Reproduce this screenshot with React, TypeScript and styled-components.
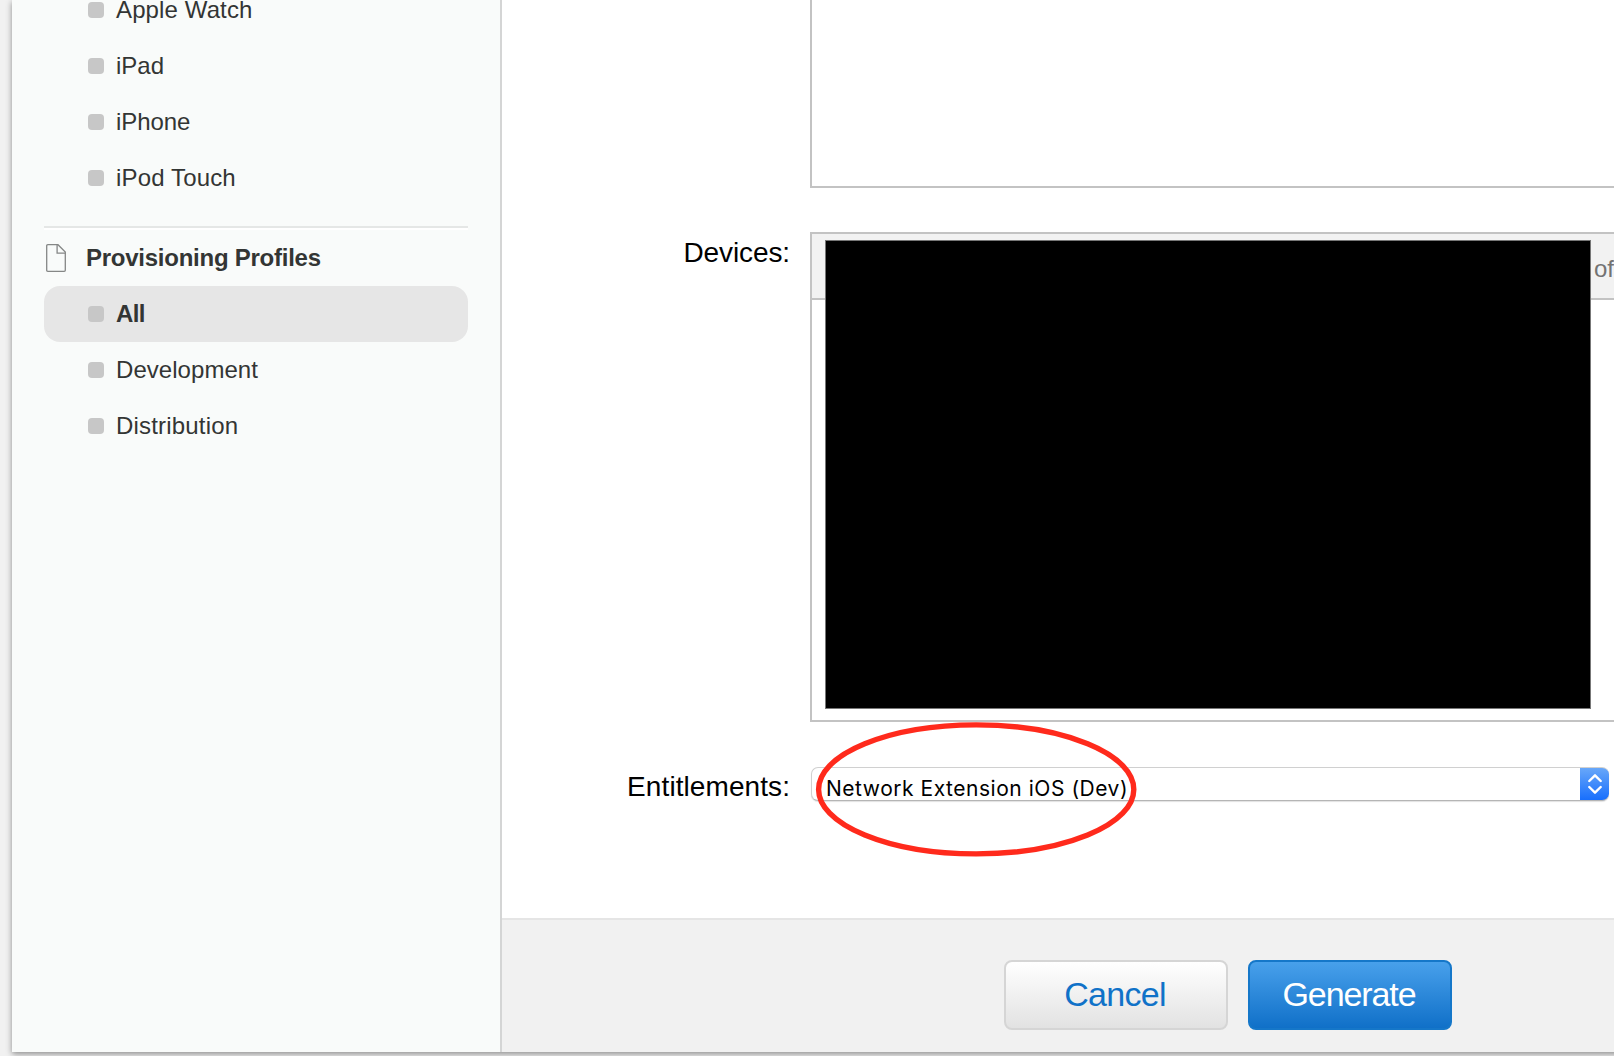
import React from "react";
import styled, { createGlobalStyle, css } from "styled-components";

const GlobalStyle = createGlobalStyle`
  *, *::before, *::after { box-sizing: border-box; }
  html, body { margin: 0; padding: 0; background: #f1f1f1; }
  body {
    font-family: "Liberation Sans", Arial, Helvetica, sans-serif;
    overflow: hidden;
  }
`;

const Page = styled.div`
  height: 1056px;
  padding: 0 0 4px 12px;
  overflow: hidden;
  background: #f1f1f1;
`;

const Panel = styled.div`
  display: flex;
  width: 1640px;
  height: 1052px;
  background: #fff;
  box-shadow: 0 2px 6px rgba(0, 0, 0, 0.42);
`;

const Sidebar = styled.nav`
  flex: none;
  width: 490px;
  padding: 0 32px;
  overflow: hidden;
  background: #f9fbfa;
  border-right: 2px solid #d4d5d5;
`;

const List = styled.ul<{ $scrolled?: boolean }>`
  margin: ${(p) => (p.$scrolled ? "-18px" : "0")} 0 0;
  padding: 0;
  list-style: none;
`;

const Item = styled.li<{ $active?: boolean }>`
  display: flex;
  align-items: center;
  gap: 12px;
  height: 56px;
  padding-left: 44px;
  border-radius: 16px;
  font-size: 24px;
  line-height: 20px;
  color: #333534;
  ${(p) =>
    p.$active &&
    css`
      background: #e6e6e6;
      font-weight: 700;
    `}

  &::before {
    content: "";
    width: 16px;
    height: 16px;
    border-radius: 4px;
    background: #c7c7c7;
  }
`;

const ItemText = styled.span<{ $spacing: number }>`
  letter-spacing: ${(p) => p.$spacing}px;
  white-space: nowrap;
`;

const Divider = styled.hr`
  height: 4px;
  margin: 20px 0 0;
  border: 0;
  border-top: 2px solid #e5e7e6;
  background: #fff;
`;

const SectionTitle = styled.h2`
  display: flex;
  align-items: center;
  gap: 20px;
  height: 56px;
  margin: 0;
  padding-left: 2px;
  font-size: 24px;
  line-height: 28px;
  color: #333534;
  white-space: nowrap;
`;

const Main = styled.main`
  flex: 1;
  display: flex;
  flex-direction: column;
`;

const Form = styled.div`
  display: grid;
  grid-template-columns: 288px 1fr;
  grid-template-rows: 188px 490px 34px;
  column-gap: 20px;
  row-gap: 44px;
  height: 918px;
`;

const Label = styled.label<{ $spacing: number }>`
  grid-column: 1;
  padding-top: 5px;
  font-size: 28px;
  line-height: 32px;
  letter-spacing: ${(p) => p.$spacing}px;
  text-align: right;
  white-space: nowrap;
  color: #000;
`;

const ListBox = styled.div<{ $open?: boolean }>`
  grid-column: 2;
  position: relative;
  border: 2px solid #c3c3c3;
  border-top-width: ${(p) => (p.$open ? 0 : 2)}px;
  background: #fff;
`;

const ListHead = styled.div`
  height: 66px;
  padding: 21px 0 0 782px;
  border-bottom: 2px solid #c3c3c3;
  background: #f2f2f2;
  color: #737373;
  font-size: 24px;
  line-height: 28px;
`;

const Redaction = styled.div`
  position: absolute;
  left: 13px;
  top: 6px;
  width: 766px;
  height: 469px;
  background: #000;
  border: 1px solid #777;
`;

const SelectCell = styled.div`
  grid-column: 2;
  position: relative;
  padding: 1px 0 0 1px;
`;

const Select = styled.div`
  display: flex;
  width: 798px;
  height: 34px;
  border-radius: 7px;
  overflow: hidden;
  background: linear-gradient(#6aa9f9, #156dfd) right / 29px 100% no-repeat border-box, #fff;
  border: 1px solid #d0d0d0;
  border-right: 0;
  border-bottom-color: #b5b5b5;
  box-shadow: 0 1px 1px rgba(0, 0, 0, 0.12);
`;

const SelectValue = styled.span`
  flex: 1;
  padding-left: 14px;
  font-family: Inter, "Liberation Sans", sans-serif;
  font-size: 21px;
  line-height: 41px;
  letter-spacing: 0.53px;
  white-space: nowrap;
  color: #000;
`;

const Stepper = styled.span`
  flex: none;
  display: grid;
  place-items: center;
  width: 29px;
  height: 32px;
`;

const Highlight = styled.svg`
  position: absolute;
  left: 4px;
  top: -46px;
`;

const Footer = styled.footer`
  flex: 1;
  display: flex;
  gap: 20px;
  padding: 40px 0 0 502px;
  border-top: 2px solid #e5e5e5;
  background: #f1f1f1;
`;

const Button = styled.button<{ $primary?: boolean }>`
  width: ${(p) => (p.$primary ? 204 : 224)}px;
  height: 70px;
  padding: 0 2px 1px 0;
  border: 2px solid ${(p) => (p.$primary ? "#1577c9" : "#d5d5d5")};
  border-radius: 8px;
  background: ${(p) =>
    p.$primary
      ? "linear-gradient(#48a0eb, #1070c8)"
      : "linear-gradient(#ffffff, #e2e2e2)"};
  color: ${(p) => (p.$primary ? "#fff" : "#1072c8")};
  font-family: inherit;
  font-size: 34px;
  letter-spacing: ${(p) => (p.$primary ? -1.1 : -0.7)}px;
`;

const FileIcon = () => (
  <svg width="20" height="28" viewBox="0 0 20 28" fill="none" stroke="#858786" strokeWidth="1.3">
    <path d="M1.8.7H12L19.3 8V26.2Q19.3 27.3 18.2 27.3H1.8Q.7 27.3 .7 26.2V1.8Q.7.7 1.8.7Z" />
    <path d="M11.1.8V9.2H19.2" />
  </svg>
);

const devices = [
  { name: "Apple Watch", spacing: 0.12 },
  { name: "iPad", spacing: 0 },
  { name: "iPhone", spacing: -0.1 },
  { name: "iPod Touch", spacing: 0.15 },
];

const profiles = [
  { name: "All", spacing: -0.6, active: true },
  { name: "Development", spacing: 0.05 },
  { name: "Distribution", spacing: 0.18 },
];

export default function App() {
  return (
    <>
      <GlobalStyle />
      <Page>
        <Panel>
          <Sidebar>
            <List $scrolled>
              {devices.map((d) => (
                <Item key={d.name}>
                  <ItemText $spacing={d.spacing}>{d.name}</ItemText>
                </Item>
              ))}
            </List>
            <Divider />
            <SectionTitle>
              <FileIcon />
              <ItemText $spacing={-0.25}>Provisioning Profiles</ItemText>
            </SectionTitle>
            <List>
              {profiles.map((p) => (
                <Item key={p.name} $active={p.active}>
                  <ItemText $spacing={p.spacing}>{p.name}</ItemText>
                </Item>
              ))}
            </List>
          </Sidebar>
          <Main>
            <Form>
              <ListBox $open />
              <Label $spacing={-0.1}>Devices:</Label>
              <ListBox>
                <ListHead>of</ListHead>
                <Redaction />
              </ListBox>
              <Label $spacing={0.08}>Entitlements:</Label>
              <SelectCell>
                <Select>
                  <SelectValue>Network Extension iOS (Dev)</SelectValue>
                  <Stepper>
                    <svg width="14" height="20" viewBox="0 0 14 20" fill="none" stroke="#fff" strokeWidth="2.4" strokeLinecap="round" strokeLinejoin="round">
                      <path d="M1.3 7 7 1.3 12.7 7M1.3 13 7 18.7 12.7 13" />
                    </svg>
                  </Stepper>
                </Select>
                <Highlight width="324" height="140" viewBox="0 0 324 140">
                  <ellipse cx="162.2" cy="69.4" rx="157.6" ry="64.5" fill="none" stroke="#ff2a1c" strokeWidth="5.4" />
                </Highlight>
              </SelectCell>
            </Form>
            <Footer>
              <Button>Cancel</Button>
              <Button $primary>Generate</Button>
            </Footer>
          </Main>
        </Panel>
      </Page>
    </>
  );
}
